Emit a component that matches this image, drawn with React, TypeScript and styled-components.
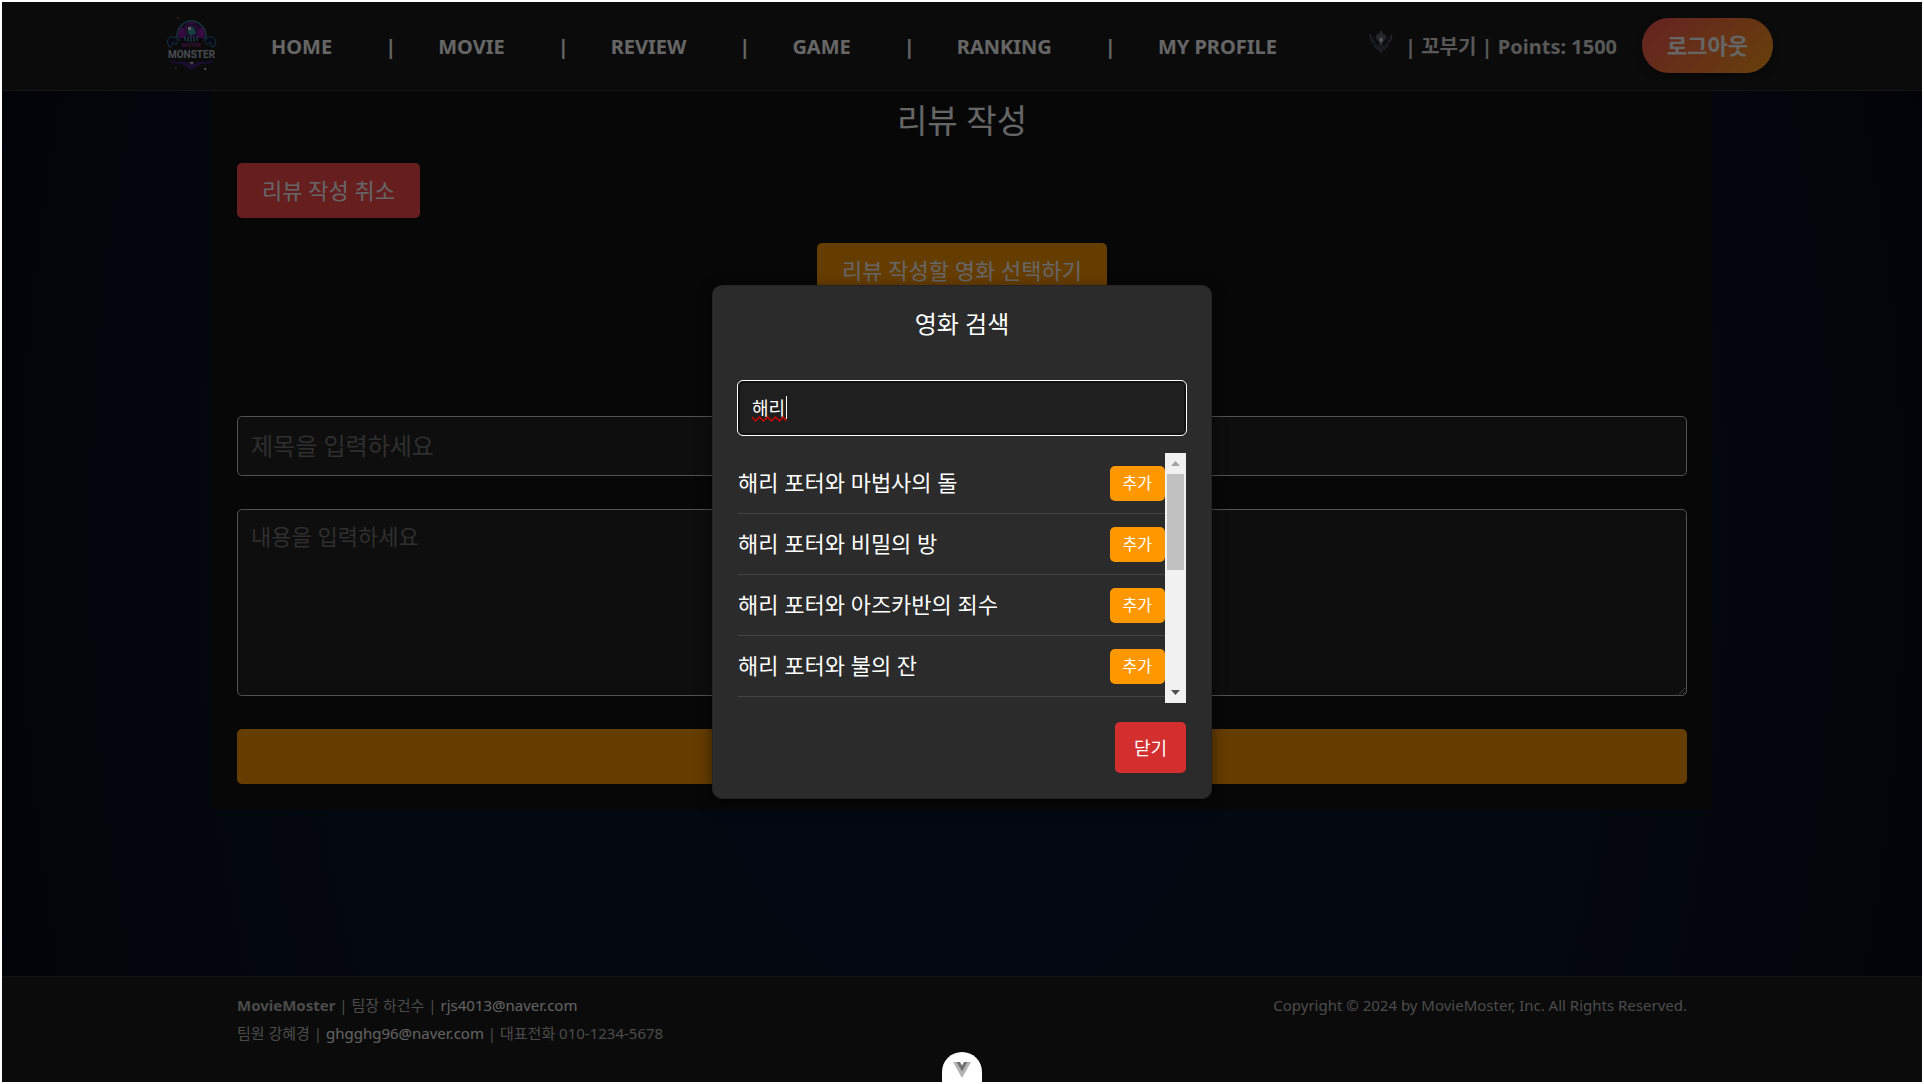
import React, { Fragment, useState } from "react";
import styled, { createGlobalStyle, css } from "styled-components";

const GlobalStyle = createGlobalStyle`
  *, *::before, *::after { box-sizing: border-box; }
  body {
    margin: 0;
    background: #fff;
    color: #fff;
    font-family: "Noto Sans", "Noto Sans CJK KR", sans-serif;
    font-size: 16px;
  }
  button, input, textarea { font-family: inherit; }
  button { cursor: pointer; }
  h1, h2, p, ul { margin: 0; padding: 0; }
`;

const Page = styled.div`
  position: relative;
  display: flex;
  flex-direction: column;
  min-height: 100vh;
  border: 2px solid #fff;
  background: radial-gradient(ellipse 56% 160% at center, #0c1730 0%, #0a1428 60%, #070f1c 84%, #01040c 100%);
`;

const Header = styled.header`
  background: #1c1c1c;
  border-bottom: 1px solid #333;
`;

const HeaderInner = styled.div`
  display: flex;
  align-items: center;
  max-width: 1622px;
  height: 88px;
  margin: 0 auto;
  padding-bottom: 2px;
`;

const LogoLink = styled.a`
  display: block;
  width: 80px;
  height: 70px;
  svg { display: block; }
`;

const Nav = styled.nav`
  display: flex;
  align-items: center;
  margin-left: 40px;
  padding-top: 4px;
  font-size: 20px;
  font-weight: 700;
  line-height: 28px;
`;

const NavLink = styled.a`
  color: #fff;
  text-decoration: none;
`;

const NavDivider = styled.span`
  margin: 0 42px 0 53px;
`;

const UserInfo = styled.div`
  display: flex;
  align-items: center;
  gap: 12px;
  margin-left: auto;
  padding-top: 4px;
  color: #ddd;
  font-size: 20px;
  font-weight: 700;
  line-height: 28px;
`;

const Badge = styled.span`
  display: flex;
  padding-bottom: 10px;
`;

const LogoutButton = styled.button`
  height: 55px;
  margin-left: 25px;
  padding: 0 25px 2px;
  border: 0;
  border-radius: 27px;
  background: linear-gradient(135deg, #ff5757, #ffa01a);
  box-shadow: 0 4px 8px rgba(0, 0, 0, 0.3);
  color: #fff;
  font-size: 22px;
  font-weight: 700;
`;

const Main = styled.main`
  flex: 1;
`;

const Editor = styled.section`
  display: flex;
  flex-direction: column;
  max-width: 1500px;
  margin: 0 auto;
  padding: 8px 25px 25px;
  background: #121212;
`;

const PageTitle = styled.h1`
  font-size: 33px;
  font-weight: 400;
  line-height: 44px;
  text-align: center;
`;

const ActionButton = styled.button<{ $tone: "danger" | "accent"; $align?: string }>`
  align-self: ${(p) => p.$align ?? "stretch"};
  height: 55px;
  padding: 0 25px 4px;
  border: 0;
  border-radius: 5px;
  background: ${(p) => (p.$tone === "danger" ? "#ff4d4d" : "#ff9800")};
  color: #fff;
  font-size: 22px;
`;

const Actions = styled.div`
  display: flex;
  flex-direction: column;
  gap: 25px;
  margin: 20px 0 118px;
`;

const Fields = styled.form`
  display: flex;
  flex-direction: column;
  gap: 33px;
`;

const field = css`
  width: 100%;
  border: 1px solid #ccc;
  border-radius: 5px;
  background: #242424;
  color: #fff;
  &::placeholder { color: #757575; opacity: 1; }
`;

const TitleInput = styled.input`
  ${field}
  height: 60px;
  padding: 0 13px 2px;
  font-size: 24px;
`;

const ContentInput = styled.textarea`
  ${field}
  display: block;
  height: 187px;
  padding: 11px 13px;
  font-size: 22px;
  line-height: 30px;
  resize: vertical;
`;

const Footer = styled.footer`
  background: #1c1c1c;
  border-top: 1px solid #333;
  color: #bbb;
  font-size: 15px;
  line-height: 28px;
`;

const FooterInner = styled.div`
  display: flex;
  justify-content: space-between;
  max-width: 1450px;
  height: 105px;
  margin: 0 auto;
  padding-top: 14px;
`;

const MailLink = styled.a`
  color: #f5f5f5;
  text-decoration: none;
`;

const Overlay = styled.div`
  position: absolute;
  inset: 0;
  display: flex;
  align-items: center;
  justify-content: center;
  background: rgba(0, 0, 0, 0.6);
`;

const Dialog = styled.div`
  display: flex;
  flex-direction: column;
  width: 500px;
  padding: 20px 25px 25px;
  border: 1px solid #242424;
  border-radius: 10px;
  background: #2b2b2b;
  box-shadow: 0 4px 15px rgba(0, 0, 0, 0.5);
`;

const DialogTitle = styled.h2`
  font-size: 24px;
  font-weight: 400;
  line-height: 36px;
  text-align: center;
`;

const SearchBox = styled.div`
  position: relative;
  margin: 39px 0 18px;
`;

const SearchInput = styled.input`
  display: block;
  width: 100%;
  height: 54px;
  padding: 0 12px 2px;
  border: 2px solid #111;
  border-radius: 5px;
  outline: 1px solid #fff;
  background: #1f1f1f;
  color: #fff;
  font-size: 18px;
  caret-color: transparent;
`;

const Caret = styled.span`
  position: absolute;
  top: 15px;
  left: 48px;
  width: 1px;
  height: 23px;
  background: #fff;
`;

const SpellingMark = styled.svg`
  position: absolute;
  top: 35px;
  left: 14px;
  pointer-events: none;
`;

const Results = styled.div`
  display: grid;
  grid-template-columns: 1fr 21px;
  height: 250px;
`;

const ResultList = styled.ul`
  list-style: none;
`;

const ResultRow = styled.li`
  display: flex;
  align-items: center;
  justify-content: space-between;
  height: 61px;
  border-bottom: 1px solid #444;
  font-size: 22px;
  line-height: 32px;
`;

const RowTitle = styled.span`
  padding-bottom: 2px;
`;

const AddButton = styled.button`
  height: 35px;
  padding: 0 13px 2px;
  border: 0;
  border-radius: 5px;
  background: #ff9800;
  color: #fff;
  font-size: 16px;
`;

const ScrollBar = styled.div`
  display: grid;
  grid-template-rows: 21px 1fr 21px;
  background: #f1f1f1;
`;

const ScrollArrow = styled.button`
  display: flex;
  align-items: center;
  justify-content: center;
  padding: 0;
  border: 0;
  background: transparent;
  color: #505050;
  &:disabled { color: #a3a3a3; }
`;

const ScrollTrack = styled.div`
  padding: 0 2px;
`;

const ScrollThumb = styled.div`
  background: #c1c1c1;
`;

const CloseButton = styled.button`
  align-self: flex-end;
  height: 51px;
  margin-top: 19px;
  padding: 0 19px 2px;
  border: 0;
  border-radius: 5px;
  background: #d32f2f;
  color: #fff;
  font-size: 18px;
`;

const DevtoolsButton = styled.button`
  position: absolute;
  bottom: 0;
  left: 50%;
  width: 40px;
  height: 30px;
  margin-left: -20px;
  padding: 5px 0 0;
  border: 0;
  border-radius: 20px 20px 0 0;
  background: #fff;
  svg { display: block; margin: 0 auto; }
`;

const MonsterLogo = () => (
  <svg width="80" height="70" viewBox="0 0 80 70" aria-hidden="true">
    <path d="M25 27 A15.500 17 0 0 1 56 27 L52 31 H29 Z" fill="#3c6f8c" />
    <path d="M27 27 A13.500 15 0 0 1 54 27 L51 31 H30 Z" fill="#170b2e" />
    <path d="M28 28 C26 19 30 16 33 18 L35 28 Z M53 28 C55 19 51 16 48 18 L46 28 Z" fill="#84209e" />
    <path d="M33 20 C32 10 49 10 48 20 L46 16 L44 14 H37 L35 16 Z" fill="#8f24a8" />
    <circle cx="40.500" cy="21" r="6" fill="#123b56" stroke="#7d2496" strokeWidth="1.500" />
    <path d="M37 20 L40 16 L43 18 L45 23 L40 26 L37 23 Z" fill="#3f98a8" />
    <path d="M37 17 h3 v3 h-3z" fill="#e8edf4" />
    <path d="M34 26 V31 M37 27 V32 M40 27 V32 M43 27 V32 M46 26 V31" stroke="#3a8e9c" strokeWidth="1.500" />
    <path d="M18 37 L16 31 L19 27 L24 27 L27 31 L25 35 L22 32 L20 37 Z M63 37 L65 31 L62 27 L57 27 L54 31 L56 35 L59 32 L61 37 Z" fill="#101a38" stroke="#357390" />
    <path d="M19 50 L26 52 L34 52 L40.500 55 L47 52 L55 52 L62 50 L60 53 L50 54 L40.500 60 L31 54 L21 53 Z" fill="#44207c" />
    <path d="M38 52 h5 l-2 3z" fill="#c9b4dc" />
    <text x="40.500" y="37" textAnchor="middle" fontFamily="Liberation Sans" fontWeight="700" fontSize="6" fill="#a32c94">MOVIE</text>
    <text x="40.500" y="48" textAnchor="middle" fontFamily="Roboto, Liberation Sans, sans-serif" fontWeight="700" fontSize="10" fill="#b4bccb">MONSTER</text>
    <path d="M26 8 h2 M24 58 h2" stroke="#888" />
    <path d="M53 58 h2 v2 h-1z" fill="#eee" />
  </svg>
);

const RankBadge = () => (
  <svg width="24" height="24" viewBox="0 0 24 24" aria-hidden="true">
    <path d="M1 4 L5 8 L8 4 L12 1 L16 4 L19 8 L23 4 L22 11 L18 17 L12 24 L6 17 L2 11 Z" fill="#2d3336" />
    <path d="M12 0 L14 4 L12 6 L10 4 Z M7 5 L12 4 L17 5 L16 12 L12 16 L8 12 Z" fill="#5d666b" />
    <path d="M1 4 L2 10 L5 12 M23 4 L22 10 L19 12 M5 15 L9 20 M19 15 L15 20 M9 16 L12 22 L15 16" fill="none" stroke="#626c70" />
    <path d="M12 7 L14 10 L12 13 L10 10 Z" fill="#d5dcde" />
    <path d="M6 9 L10 14 M18 9 L14 14" stroke="#0c0e10" strokeWidth="2" />
  </svg>
);

const VueMark = () => (
  <svg width="18" height="16" viewBox="0 0 18 16" aria-hidden="true">
    <path d="M0 0 H18 L9 16 Z" fill="#b4b4b4" />
    <path d="M3.600 0 H14.400 L9 9.500 Z" fill="#707070" />
    <path d="M7 0 H11 L9 3.500 Z" fill="#fff" />
  </svg>
);

const Triangle = ({ up }: { up?: boolean }) => (
  <svg width="9" height="5" viewBox="0 0 9 5" aria-hidden="true">
    <path d={up ? "M0 5 L4.500 0 L9 5 Z" : "M0 0 L4.500 5 L9 0 Z"} fill="currentColor" />
  </svg>
);

const menu = ["HOME", "MOVIE", "REVIEW", "GAME", "RANKING", "MY PROFILE"];

const movies = [
  "해리 포터와 마법사의 돌",
  "해리 포터와 비밀의 방",
  "해리 포터와 아즈카반의 죄수",
  "해리 포터와 불의 잔",
  "해리 포터와 불사조 기사단",
  "해리 포터와 혼혈 왕자",
  "해리 포터와 죽음의 성물 1",
  "해리 포터와 죽음의 성물 2",
  "해리 포터 20주년 기념",
];

const VISIBLE_ROWS = 4;

function MovieResults() {
  const [first, setFirst] = useState(0);
  const last = movies.length - VISIBLE_ROWS;
  const move = (step: number) => setFirst((n) => Math.min(last, Math.max(0, n + step)));
  const thumb = 46;

  return (
    <Results onWheel={(e) => move(Math.sign(e.deltaY))}>
      <ResultList>
        {movies.slice(first, first + VISIBLE_ROWS).map((title) => (
          <ResultRow key={title}>
            <RowTitle>{title}</RowTitle>
            <AddButton type="button">추가</AddButton>
          </ResultRow>
        ))}
      </ResultList>
      <ScrollBar>
        <ScrollArrow type="button" aria-label="위로" disabled={first === 0} onClick={() => move(-1)}>
          <Triangle up />
        </ScrollArrow>
        <ScrollTrack>
          <ScrollThumb
            style={{
              height: `${thumb}%`,
              transform: `translateY(${(first / last) * ((100 - thumb) / thumb) * 100}%)`,
            }}
          />
        </ScrollTrack>
        <ScrollArrow type="button" aria-label="아래로" disabled={first === last} onClick={() => move(1)}>
          <Triangle />
        </ScrollArrow>
      </ScrollBar>
    </Results>
  );
}

export default function App() {
  const [query, setQuery] = useState("해리");

  return (
    <>
      <GlobalStyle />
      <Page>
        <Header>
          <HeaderInner>
            <LogoLink href="#" aria-label="Movie Monster">
              <MonsterLogo />
            </LogoLink>
            <Nav>
              {menu.map((label, i) => (
                <Fragment key={label}>
                  {i > 0 && <NavDivider>|</NavDivider>}
                  <NavLink href="#">{label}</NavLink>
                </Fragment>
              ))}
            </Nav>
            <UserInfo>
              <Badge>
                <RankBadge />
              </Badge>
              <span>| 꼬부기 | Points: 1500</span>
            </UserInfo>
            <LogoutButton type="button">로그아웃</LogoutButton>
          </HeaderInner>
        </Header>

        <Main>
          <Editor>
            <PageTitle>리뷰 작성</PageTitle>
            <Actions>
              <ActionButton type="button" $tone="danger" $align="flex-start">
                리뷰 작성 취소
              </ActionButton>
              <ActionButton type="button" $tone="accent" $align="center">
                리뷰 작성할 영화 선택하기
              </ActionButton>
            </Actions>
            <Fields onSubmit={(e) => e.preventDefault()}>
              <TitleInput aria-label="제목" placeholder="제목을 입력하세요" />
              <ContentInput aria-label="내용" placeholder="내용을 입력하세요" />
              <ActionButton type="submit" $tone="accent" aria-label="리뷰 작성" />
            </Fields>
          </Editor>
        </Main>

        <Footer>
          <FooterInner>
            <div>
              <p>
                <strong>MovieMoster</strong> | 팀장 하건수 |{" "}
                <MailLink href="mailto:rjs4013@naver.com">rjs4013@naver.com</MailLink>
              </p>
              <p>
                팀원 강혜경 | <MailLink href="mailto:ghgghg96@naver.com">ghgghg96@naver.com</MailLink> | 대표전화
                010-1234-5678
              </p>
            </div>
            <p>Copyright © 2024 by MovieMoster, Inc. All Rights Reserved.</p>
          </FooterInner>
        </Footer>

        <Overlay>
          <Dialog role="dialog" aria-modal="true" aria-labelledby="search-title">
            <DialogTitle id="search-title">영화 검색</DialogTitle>
            <SearchBox>
              <SearchInput
                aria-label="영화 검색"
                value={query}
                spellCheck={false}
                onChange={(e) => setQuery(e.target.value)}
              />
              <SpellingMark width="35" height="6" viewBox="0 0 35 6" aria-hidden="true">
                <path
                  d="M0 1 L3.500 5 L7.500 1 L11.500 5 L15.500 1 L19.500 5 L23.500 1 L27.500 5 L31 1 L34.500 5"
                  fill="none"
                  stroke="#d80000"
                  strokeWidth="1.300"
                />
              </SpellingMark>
              <Caret />
            </SearchBox>
            <MovieResults />
            <CloseButton type="button">닫기</CloseButton>
          </Dialog>
        </Overlay>

        <DevtoolsButton type="button" aria-label="Vue DevTools">
          <VueMark />
        </DevtoolsButton>
      </Page>
    </>
  );
}
